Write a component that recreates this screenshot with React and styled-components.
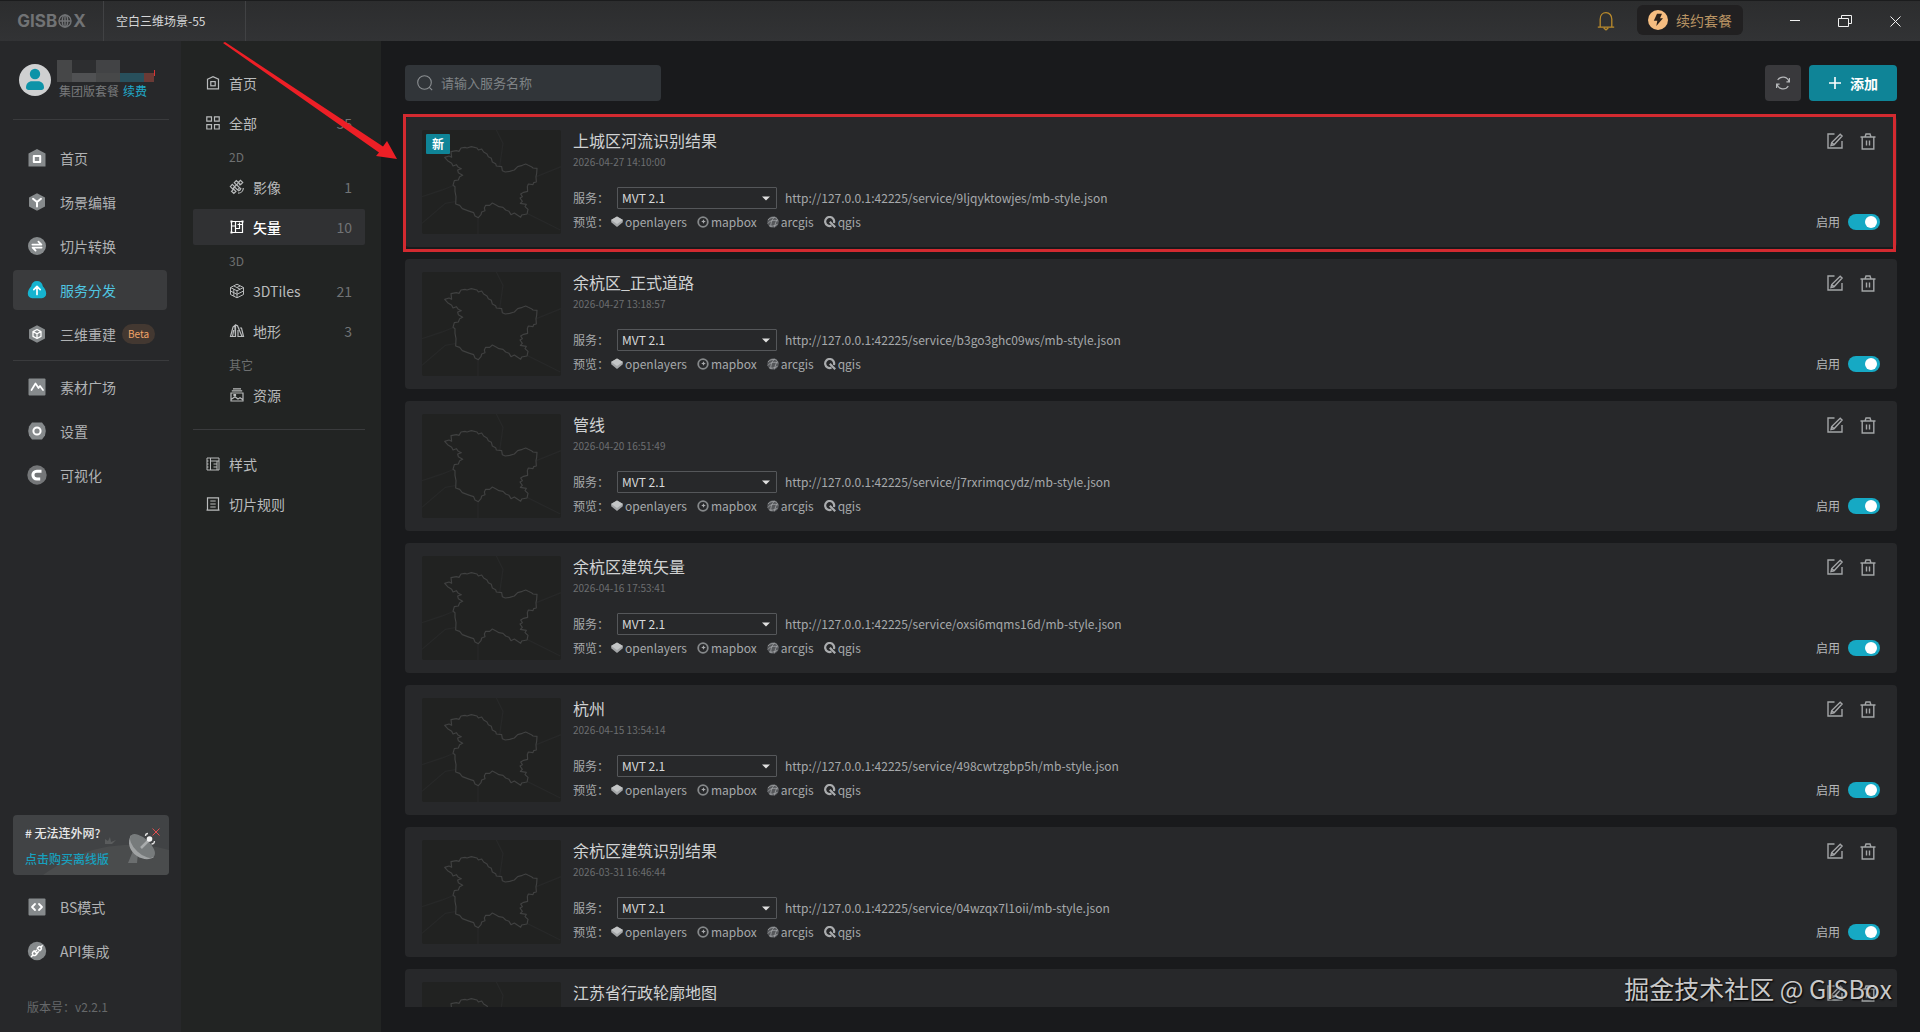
import React from "react";
import styled, { createGlobalStyle, css } from "styled-components";

const GlobalStyle = createGlobalStyle`
  *, *::before, *::after { box-sizing: border-box; }
  body {
    margin: 0;
    background: #191a1c;
    color: #c4c6c8;
    font-family: "Noto Sans CJK SC", "Noto Sans", sans-serif;
    font-size: 14px;
    line-height: 20px;
    overflow: hidden;
  }
  button, input, select { font: inherit; color: inherit; }
  button { background: none; border: 0; padding: 0; cursor: pointer; }
  a { color: inherit; text-decoration: none; }
  ul { list-style: none; margin: 0; padding: 0; }
  h2, p { margin: 0; font-weight: 400; }
  svg { display: block; flex: none; }
`;

const Shell = styled.div`
  position: relative;
  height: 100vh;
  display: grid;
  grid-template-rows: 41px minmax(0, 1fr);
`;

/* ---------- title bar ---------- */
const TitleBar = styled.header`
  display: flex;
  align-items: stretch;
  background: linear-gradient(#2c2d2e, #323335);
  border-top: 1px solid #1b1c1d;
`;
const Logo = styled.div`
  width: 104px;
  display: flex;
  align-items: center;
  justify-content: center;
  gap: 1px;
  border-right: 1px solid #414244;
  color: #717375;
  font: 700 17px/17px Inter, sans-serif;
`;
const SceneTab = styled.button`
  width: 142px;
  padding-left: 12px;
  text-align: left;
  font-size: 12px;
  color: #d6d7d8;
  border-right: 1px solid #414244;
`;
const TitleActions = styled.div`
  margin-left: auto;
  display: flex;
  align-items: center;
`;
const RenewPill = styled.button`
  display: flex;
  align-items: center;
  gap: 8px;
  height: 30px;
  padding: 0 11px;
  margin: 0 27px 2px 22px;
  border-radius: 6px;
  background: #212021;
  color: #b99464;
`;
const WindowButton = styled.button`
  width: 50px;
  height: 32px;
  display: grid;
  place-items: center;
  color: #f1f1f1;
`;
const BellButton = styled.button`
  display: grid;
  place-items: center;
  color: #b98a2c;
`;

/* ---------- body ---------- */
const Body = styled.div`
  display: grid;
  grid-template-columns: 181px 200px minmax(0, 1fr);
  min-height: 0;
`;
const Sidebar = styled.aside`
  display: flex;
  flex-direction: column;
  background: #27282a;
  padding: 19px 12px 15px 13px;
`;
const User = styled.div`
  display: flex;
  align-items: center;
  gap: 6px;
  height: 40px;
  padding-left: 6px;
`;
const UserMeta = styled.div`
  display: flex;
  flex-direction: column;
`;
const Plan = styled.p`
  font-size: 12px;
  line-height: 18px;
  padding-left: 2px;
  white-space: nowrap;
  color: #77797b;
`;
const Renew = styled.a`
  color: #20a9c8;
  margin-left: 4px;
`;
const Rule = styled.hr`
  width: 100%;
  height: 1px;
  border: 0;
  background: #3a3b3d;
  margin: ${(p) => p.$margin};
`;
const NavList = styled.ul`
  display: flex;
  flex-direction: column;
  gap: 4px;
`;
const NavLink = styled.a`
  display: flex;
  align-items: center;
  height: 40px;
  margin-right: 2px;
  padding-left: 14px;
  border-radius: 4px;
  white-space: nowrap;
  color: #b0b2b4;
  ${(p) => p.$active && css`
    background: #3a3b3d;
    color: #4fc6e2;
  `}
`;
const NavIcon = styled.span`
  width: 20px;
  margin-right: 13px;
  display: grid;
  place-items: center;
  color: #868a8c;
`;
const Beta = styled.span`
  margin-left: 6px;
  padding: 0 6px;
  border-radius: 10px;
  background: #433831;
  color: #f0a468;
  font-size: 10px;
  line-height: 20px;
`;
const Promo = styled.section`
  position: relative;
  margin: auto 0 12px;
  height: 60px;
  padding: 8px 12px;
  display: flex;
  flex-direction: column;
  gap: 6px;
  border-radius: 4px;
  overflow: hidden;
  background: #414345;
  font-size: 12px;
  color: #e8e8e8;
  font-weight: 500;
`;
const PromoArt = styled.svg`
  position: absolute;
  right: 0;
  bottom: 0;
`;
const PromoText = styled.span`
  position: relative;
`;
const PromoLink = styled.a`
  position: relative;
  color: #17a0be;
`;
const PromoClose = styled.button`
  position: absolute;
  top: 13px;
  right: 9px;
  color: #e04f4f;
`;
const Version = styled.p`
  padding-left: 14px;
  margin-top: 26px;
  font-size: 12px;
  color: #66686a;
`;

/* ---------- category column ---------- */
const Categories = styled.nav`
  background: #222423;
  padding: 24px 16px 0 12px;
`;
const CategoryLink = styled.a`
  display: flex;
  align-items: center;
  height: 36px;
  margin-bottom: ${(p) => (p.$tight ? "0" : "4px")};
  padding: 0 13px 0 ${(p) => (p.$nested ? "36px" : "12px")};
  border-radius: 2px;
  color: #b9bbbc;
  ${(p) => p.$active && css`
    background: #303133;
    color: #ffffff;
    font-weight: 500;
  `}
`;
const CategoryIcon = styled.span`
  width: 16px;
  margin-right: 8px;
  display: grid;
  place-items: center;
`;
const Count = styled.span`
  margin-left: auto;
  color: #717375;
  font-weight: 400;
`;
const GroupLabel = styled.p`
  padding-left: 36px;
  font-size: 12px;
  line-height: 24px;
  color: #6e7071;
`;

/* ---------- main ---------- */
const Main = styled.main`
  min-width: 0;
  min-height: 0;
  display: flex;
  flex-direction: column;
  padding: 24px 23px 25px 24px;
  background: #191a1c;
`;
const Toolbar = styled.div`
  display: flex;
  align-items: center;
  gap: 8px;
  margin-bottom: 16px;
`;
const SearchBox = styled.label`
  display: flex;
  align-items: center;
  gap: 8px;
  width: 256px;
  height: 36px;
  padding: 0 12px;
  margin-right: auto;
  border-radius: 4px;
  background: #313539;
  color: #8b8f92;
`;
const SearchInput = styled.input`
  flex: 1;
  min-width: 0;
  padding: 0;
  border: 0;
  outline: 0;
  background: none;
  font-size: 13px;
  &::placeholder { color: #7f8386; opacity: 1; }
`;
const RefreshButton = styled.button`
  width: 36px;
  height: 36px;
  display: grid;
  place-items: center;
  border-radius: 4px;
  background: #39393c;
  color: #b5b7b9;
`;
const AddButton = styled.button`
  display: flex;
  align-items: center;
  justify-content: center;
  gap: 8px;
  width: 88px;
  height: 36px;
  border-radius: 4px;
  background: #0f8497;
  color: #ffffff;
  font-weight: 700;
`;
const ServiceList = styled.ul`
  flex: 1;
  min-height: 0;
  overflow-y: auto;
  scrollbar-width: none;
  display: flex;
  flex-direction: column;
  gap: 12px;
`;
const Card = styled.li`
  flex: none;
  display: flex;
  gap: 12px;
  height: 130px;
  padding: 13px 17px;
  border-radius: 4px;
  background: #27282a;
`;
const Thumb = styled.div`
  position: relative;
  width: 139px;
  height: 104px;
  border-radius: 2px;
  overflow: hidden;
  background: #212221;
`;
const NewBadge = styled.span`
  position: absolute;
  top: 4px;
  left: 4px;
  width: 24px;
  border-radius: 1px;
  background: #0f8497;
  color: #ffffff;
  font-size: 12px;
  font-weight: 700;
  text-align: center;
`;
const Info = styled.div`
  flex: 1;
  min-width: 0;
  display: flex;
  flex-direction: column;
`;
const Name = styled.h2`
  margin-bottom: 4px;
  font-size: 16px;
  line-height: 20px;
  color: #d0d2d3;
`;
const Time = styled.time`
  margin-bottom: 17px;
  font-size: 10px;
  line-height: 16px;
  color: #6c6e70;
`;
const Field = styled.div`
  display: flex;
  align-items: center;
  height: 22px;
  margin-bottom: 2px;
  font-size: 12px;
  white-space: nowrap;
  color: #a6a8aa;
`;
const FieldLabel = styled.label`
  width: ${(p) => p.$width};
`;
const SelectWrap = styled.span`
  position: relative;
  width: 160px;
  margin-right: 8px;
  svg { position: absolute; right: 7px; top: 9px; pointer-events: none; }
`;
const Select = styled.select`
  display: block;
  appearance: none;
  width: 100%;
  height: 22px;
  padding: 0 20px 0 4px;
  border: 1px solid #55575a;
  border-radius: 1px;
  background: transparent;
  color: #d8d9da;
  line-height: 20px;
`;
const PreviewLinks = styled.span`
  display: flex;
  gap: 10px;
`;
const PreviewLink = styled.a`
  display: flex;
  align-items: center;
  gap: 2px;
`;
const Side = styled.div`
  display: flex;
  flex-direction: column;
  align-items: flex-end;
  justify-content: space-between;
  padding: 2px 0 4px;
`;
const IconActions = styled.div`
  display: flex;
  gap: 15px;
  padding-right: 3px;
`;
const IconButton = styled.button`
  color: #a3a5a7;
`;
const SwitchLabel = styled.label`
  display: flex;
  align-items: center;
  gap: 8px;
  font-size: 12px;
  line-height: 16px;
  color: #b6b8ba;
`;
const Switch = styled.input`
  appearance: none;
  position: relative;
  width: 32px;
  height: 16px;
  margin: 0;
  border-radius: 8px;
  background: #45474a;
  &::after {
    content: "";
    position: absolute;
    top: 2px;
    left: 3px;
    width: 12px;
    height: 12px;
    border-radius: 50%;
    background: #ffffff;
  }
  &:checked { background: #16a9c4; }
  &:checked::after { left: 17px; }
`;

/* ---------- annotations over the page ---------- */
const Highlight = styled.div`
  position: absolute;
  top: 114px;
  left: 403px;
  right: 24px;
  height: 138px;
  border: 3px solid #d32a30;
  pointer-events: none;
`;
const Arrow = styled.svg`
  position: absolute;
  top: 41px;
  left: 220px;
  pointer-events: none;
`;
const Watermark = styled.p`
  position: absolute;
  right: 28px;
  bottom: 26px;
  font-size: 25px;
  line-height: 36px;
  color: #c9c9c9;
  text-shadow: 1px 1px 2px #000000;
  pointer-events: none;
`;

/* ---------- icons ---------- */
const Solid = ({ children, size = 20 }) => (
  <svg width={size} height={size} viewBox="0 0 20 20" fill="none" strokeLinecap="round" strokeLinejoin="round" aria-hidden="true">{children}</svg>
);
const Line = ({ children, size = 16, width = 1.2 }) => (
  <svg width={size} height={size} viewBox="0 0 16 16" fill="none" stroke="currentColor" strokeWidth={width} aria-hidden="true">{children}</svg>
);
const HEX = "M10 1.2 18 5.4v9.2L10 18.8 2 14.6V5.4Z";

const navIcons = {
  home: <Solid><path d="M10 1 18.5 5.5V18.5H1.5V5.5Z" fill="currentColor" /><rect x="6.8" y="8" width="6.4" height="6" stroke="#fff" strokeWidth="2" /></Solid>,
  scene: <Solid><path d={HEX} fill="currentColor" /><path d="M6 6.8 10 10l4-3.2M10 10v4.4" stroke="#fff" strokeWidth="2" /></Solid>,
  convert: <Solid><circle cx="10" cy="10" r="9" fill="currentColor" /><path d="M5.4 8.6h9L11.4 5.6M14.6 11.6h-9l3 3" stroke="#fff" strokeWidth="1.8" /></Solid>,
  publish: <Solid><path d="M10 1c3.3 0 5.3 2 5.8 5.2C17.9 8.6 19.2 11 19.2 13.6c0 2.8-1.8 4.6-4.4 4.6H5.2C2.6 18.2.8 16.4.8 13.6.8 11 2.1 8.6 4.2 6.2 4.7 3 6.7 1 10 1Z" fill="#16b4d0" /><path d="M10 14.4V6.8M6.8 9.6 10 6.4l3.2 3.2" stroke="#fff" strokeWidth="1.7" /></Solid>,
  rebuild: <Solid><path d={HEX} fill="currentColor" /><path d="M10 5.5 14 7.6v4.8l-4 2.1-4-2.1V7.6ZM6 7.6l4 2.2 4-2.2M10 9.8v4.6" stroke="#fff" strokeWidth="1.3" /></Solid>,
  assets: <Solid><rect x="1.5" y="1.5" width="17" height="17" rx="1" fill="currentColor" /><path d="m4.5 13 4-6.5 3 4.5 1.5-2 3 4" stroke="#fff" strokeWidth="1.7" /></Solid>,
  settings: <Solid><path d="M5 1.5h10L18 5.5 18.8 10 18 14.5 15 18.5H5L2 14.5 1.2 10 2 5.5Z" fill="currentColor" /><circle cx="10" cy="10" r="3.6" stroke="#fff" strokeWidth="2" /></Solid>,
  visual: <Solid><circle cx="10" cy="10" r="9.7" fill="#747678" /><path d="M14.5 6.2H9.8a3.9 3.9 0 0 0 0 7.8h3.4" stroke="#fff" strokeWidth="3" strokeLinecap="butt" /><path d="M11 9.2h2.5" stroke="#747678" strokeWidth="1.5" /></Solid>,
  bs: <Solid><rect x="1.5" y="1.5" width="17" height="17" rx="1" fill="currentColor" /><path d="M8 7 5 10l3 3M12 7l3 3-3 3" stroke="#fff" strokeWidth="1.8" /></Solid>,
  api: <Solid><circle cx="10" cy="10" r="9.2" fill="currentColor" /><g stroke="#fff" strokeWidth="1.5"><path d="m10.300 7.200 2.500 2.500 1.300-1.300a1.800 1.800 0 0 0-2.500-2.500ZM7.200 9.900l2.800 2.800-1.400 1.400a2 2 0 0 1-2.800-2.800ZM13.700 6.300l1.500-1.500M5.800 14.200l-1.300 1.300M8.800 10l.8-.8M10.500 11.700l.8-.8" /></g></Solid>,
};

const categoryIcons = {
  home: <Line><path d="M2.5 4.2 8 1.6l5.500 2.600v9.700h-11Z" /><rect x="5.8" y="6.6" width="4.4" height="4.2" /></Line>,
  all: <Line><path d="M1.8 1.8h4.700v4.400H1.800ZM9.500 1.800h4.700v4.400H9.500ZM1.800 9.600h4.700V14H1.800ZM9.500 9.600h4.700V14H9.500Z" /></Line>,
  image: <Line><path d="m5.300 3.700 2-2.200 2.300 2.300-2.100 2.100ZM1.300 7.600l2-2.200 2.300 2.300-2 2.200ZM2.500 12.300l2.100-2.100 2.300 2.200-2.100 2.100ZM9.500 3.300l2-1.900 2.200 2.200-2.100 2.100ZM5.500 7.800 7.700 5.900l2.900 2.900-2.100 2.100ZM10 6l2-1M3.800 10.200 5.800 8.200" /><path d="M9 14.200c3 0 5.300-2.300 5.300-5.300M9 11.800c1.700-.2 2.700-1.200 2.900-2.900" /></Line>,
  vector: <Line><path d="M2.500 2.500h11v11h-11ZM6.500 2.500v11M2.500 7h4M6.500 9.500h4V3.500M8.500 5.500h5" /><path d="M1.500 1.500h2v2h-2ZM12.500 1.500h2v2h-2ZM1.500 12.500h2v2h-2Z" fill="currentColor" stroke="none" /></Line>,
  tiles: <Line width={1}><path d="M8 1.200 14.500 4.500v7L8 14.800l-6.500-3.300v-7ZM1.500 4.500 8 7.800l6.500-3.300M8 7.800v7M5 3l6 3.200M4.800 6.200v6.900M1.500 8 8 11.300 14.500 8M11 3 8 4.500" /></Line>,
  terrain: <Line><path d="M1.500 13.500 4 4l1.800-1.500L6.500 13.500ZM6.500 13.500V2l2 .8L13 13.500M9 7v6.500h5.500L12.500 5h-1.700M3.500 13.500 4.700 7" /></Line>,
  resource: <Line><path d="M4 1.800h8M2.800 3.900h10.400M2 6h12v8H2ZM2 12.500l4-2.800 3 2.300 2-1.200 3 2" /><path d="M5 7.600h1.500v1H5Z" /></Line>,
  style: <Line width={1}><path d="M2 2h12v12H2ZM5.500 2v12M5.500 5H14M12 5v9M8.500 8H12M8.500 11H12M2 5h1.500M2 8h1.500M2 11h1.500" /></Line>,
  rules: <Line><path d="M2.500 1.800h11v12.400h-11ZM5.300 5h5.400M5.300 8h5.400M5.300 11h5.400M1.500 14.200h13" /></Line>,
};

const Globe = () => (
  <svg width="14" height="14" viewBox="0 0 13 13" fill="none" stroke="currentColor" strokeWidth="1.3" aria-hidden="true">
    <circle cx="6.5" cy="6.5" r="5.6" /><ellipse cx="6.5" cy="6.5" rx="2.5" ry="5.6" /><path d="M1 6.500h11M6.500 1v11" />
  </svg>
);
const BellIcon = () => (
  <svg width="18" height="20" viewBox="0 0 18 20" fill="none" stroke="currentColor" strokeWidth="1.3" aria-hidden="true">
    <path d="M.8 16.200h16.400M3.200 16V8.200C3.200 4.300 5.600 1.700 9 1.700s5.800 2.600 5.800 6.500V16M6.700 17l2.300 1.800 2.300-1.800" />
  </svg>
);
const BoltIcon = () => (
  <svg width="20" height="20" viewBox="0 0 20 20" aria-hidden="true">
    <circle cx="10" cy="10" r="10" fill="#f6bd80" /><path d="M9 3.800h5L12 8.200h3L8.300 16l1-5.200H5.800Z" fill="#2a211b" />
  </svg>
);
const AvatarIcon = () => (
  <svg width="32" height="32" viewBox="0 0 32 32" aria-hidden="true">
    <circle cx="16" cy="16" r="16" fill="#cfd0d1" /><circle cx="16" cy="10" r="5.2" fill="#0d93a8" />
    <path d="M7 23.500c0-4 2.500-6.300 6-6.300h6c3.500 0 6 2.300 6 6.300 0 1.400-1 2.500-2.500 2.500h-13C8 26 7 24.900 7 23.500Z" fill="#0d93a8" />
  </svg>
);
const MaskedName = () => (
  <svg width="98" height="22" viewBox="0 0 98 22" shapeRendering="crispEdges" aria-hidden="true">
    <path d="M0 0h15v22H0Z" fill="#464748" /><path d="M15 0h24v13H15Z" fill="#2d2e30" /><path d="M15 13h24v9H15Z" fill="#505153" />
    <path d="M39 0h24v13H39Z" fill="#424345" /><path d="M39 13h24v9H39Z" fill="#474849" /><path d="M63 13h24v9H63Z" fill="#28505c" />
    <path d="M87 13h10v9H87Z" fill="#6b3a35" /><path d="M97 10h1v6h-1Z" fill="#d33" />
  </svg>
);
const SearchIcon = () => (
  <svg width="16" height="16" viewBox="0 0 16 16" fill="none" stroke="currentColor" strokeWidth="1.1" aria-hidden="true">
    <circle cx="7.5" cy="7.5" r="6.8" /><path d="m12.300 12.300 2.900 2.900" />
  </svg>
);
const RefreshIcon = () => (
  <Line><path d="M14 6.800A6.200 6.200 0 0 0 2.700 5M2 9.200A6.200 6.200 0 0 0 13.300 11M14.400 3v3.900h-3M1.600 13V9.100h3" /></Line>
);
const PlusIcon = () => (
  <svg width="14" height="14" viewBox="0 0 14 14" stroke="currentColor" strokeWidth="1.6" aria-hidden="true"><path d="M7 1v12M1 7h12" /></svg>
);
const EditIcon = () => (
  <svg width="18" height="18" viewBox="0 0 18 18" fill="none" stroke="currentColor" strokeWidth="1.4" aria-hidden="true">
    <path d="M8.500 2H2v14h14V9M14.200 2.200l1.900 1.900L8 12.800l-3 .7.700-3ZM5.700 10.500 8 12.800" />
  </svg>
);
const TrashIcon = () => (
  <svg width="18" height="18" viewBox="0 0 18 18" fill="none" stroke="currentColor" strokeWidth="1.4" aria-hidden="true">
    <path d="M1.500 5h15M3.200 5v12h11.600V5M6 5l1-3h4l1 3M7.500 8.500v5M10.500 8.500v5" />
  </svg>
);
const CaretIcon = () => <svg width="8" height="5" viewBox="0 0 8 5" aria-hidden="true"><path d="M0 .5h8L4 4.500Z" fill="#e0e0e0" /></svg>;

const previewIcons = {
  openlayers: <svg width="12" height="12" viewBox="0 0 12 12" aria-hidden="true"><path d="M6 .5 11.800 3.800v2.400L6 11 .2 6.200V3.800Z" fill="#a4a6a8" /><path d="M6 .5 11.800 4 6 8 .2 4Z" fill="#c3c5c6" /></svg>,
  mapbox: <svg width="12" height="12" viewBox="0 0 12 12" aria-hidden="true"><circle cx="6" cy="6" r="4.800" fill="none" stroke="#85888a" strokeWidth="1.800" /><path d="m6.500 3.200.7 1.600 1.600.7-1.600.7-.7 1.600-.7-1.600-1.600-.7 1.600-.7Z" fill="#a9abad" /></svg>,
  arcgis: <svg width="12" height="12" viewBox="0 0 12 12" fill="none" stroke="#a5a7a9" strokeWidth=".8" aria-hidden="true"><circle cx="6" cy="6" r="5.8" fill="#55575a" stroke="none" /><path d="M1 4C3 1.500 7 .5 10 2.500M.8 7.500C3 4.500 7 3.500 11.400 5M4 11.200c-.8-3 .5-7 3.500-10.500M7.500 11.300C8 8 9 5 10.500 3M2 9.800c2 .8 5 .5 8.500-1.500" /></svg>,
  qgis: <svg width="12" height="12" viewBox="0 0 12 12" fill="none" stroke="#aaacae" strokeWidth="2.200" aria-hidden="true"><path d="M7.500 9.600A4.500 4.500 0 1 1 9.900 7" /><path d="m5.800 5.800 5.400 5.400" /></svg>,
};

const OUTLINE = "M165 322 178 318 186 322 184 305 200 302 208 304 214 294 226 292 232 294 245 290 262 294 266 300 276 297 282 306 292 312 296 320 305 325 308 336 318 341 320 348 336 350 338 362 347 366 360 364 374 360 384 350 398 346 408 342 416 346 425 350 430 354 442 355 441 370 439 380 440 396 432 398 430 404 416 402 413 410 414 424 402 427 393 432 398 440 391 444 398 454 392 460 410 463 406 470 415 478 412 492 396 495 393 502 384 496 374 489 364 494 358 484 348 480 340 472 328 470 318 464 308 459 300 466 288 466 284 474 286 482 276 486 274 494 266 503 256 498 252 488 240 484 226 479 218 476 210 466 198 462 199 440 196 424 196 410 190 406 194 392 206 390 210 380 219 376 206 368 204 360 215 356 206 352 200 344 190 348 186 340 174 332Z";

const Boundary = () => (
  <svg width="139" height="104" viewBox="97 240 417 312" fill="none" aria-hidden="true">
    <path d="M97 440l60-20 38-15M265 503v49M412 490l100 50M330 350l10-70-20-40M440 380l74-30M97 520l70-60 30-5" stroke="#272828" strokeWidth="4" />
    <path d={OUTLINE} stroke="#404141" strokeWidth="3.5" strokeLinejoin="round" />
  </svg>
);

const DishArt = () => (
  <PromoArt width="156" height="60" viewBox="0 0 156 60" aria-hidden="true">
    <path d="M30 60C60 38 90 30 116 30c18 0 30 2 40 5v25Z" fill="#4a4c4d" />
    <path d="M92 29v-5l3 2 2-4 1 5 5-2-4 4Z" fill="#5a5c5d" />
    <path d="m120 36-5 12h9l1-10Z" fill="#6b6e6f" />
    <path d="M118 20c-4 7-2 16 6 21 6 4 13 4 17 1Z" fill="#a0a3a4" />
    <ellipse cx="129.500" cy="31" rx="15.500" ry="7.500" transform="rotate(43 129.500 31)" fill="#777b7c" />
    <path d="m128 33 8-8" stroke="#a9acad" strokeWidth="2.500" />
    <circle cx="136.500" cy="24" r="2.800" fill="#f2f2f2" />
    <path d="M132.500 21c0-1.500 1-2.500 2.500-2.500M138.500 29c1.800 0 3-1.200 3-3" stroke="#dddddd" strokeWidth="1.300" fill="none" />
  </PromoArt>
);

/* ---------- data ---------- */
const mainNav = [
  ["home", "首页"], ["scene", "场景编辑"], ["convert", "切片转换"], ["publish", "服务分发"], ["rebuild", "三维重建", "Beta"],
];
const moreNav = [["assets", "素材广场"], ["settings", "设置"], ["visual", "可视化"]];
const footNav = [["bs", "BS模式"], ["api", "API集成"]];

const services = [
  { name: "上城区河流识别结果", time: "2026-04-27 14:10:00", id: "9ljqyktowjes", fresh: true },
  { name: "余杭区_正式道路", time: "2026-04-27 13:18:57", id: "b3go3ghc09ws" },
  { name: "管线", time: "2026-04-20 16:51:49", id: "j7rxrimqcydz" },
  { name: "余杭区建筑矢量", time: "2026-04-16 17:53:41", id: "oxsi6mqms16d" },
  { name: "杭州", time: "2026-04-15 13:54:14", id: "498cwtzgbp5h" },
  { name: "余杭区建筑识别结果", time: "2026-03-31 16:46:44", id: "04wzqx7l1oii" },
  { name: "江苏省行政轮廓地图" },
];

const Nav = ({ items }) => (
  <NavList>
    {items.map(([icon, text, tag]) => (
      <li key={icon}>
        <NavLink href="#" $active={icon === "publish"}>
          <NavIcon>{navIcons[icon]}</NavIcon>
          {text}
          {tag && <Beta>{tag}</Beta>}
        </NavLink>
      </li>
    ))}
  </NavList>
);

const Category = ({ icon, text, count, ...rest }) => (
  <CategoryLink href="#" {...rest}>
    <CategoryIcon>{categoryIcons[icon]}</CategoryIcon>
    {text}
    {count && <Count>{count}</Count>}
  </CategoryLink>
);

/* The address, previews and switch appear once a service has its id. */
const ServiceCard = ({ name, time, id, fresh }) => (
  <Card>
    <Thumb>
      <Boundary />
      {fresh && <NewBadge>新</NewBadge>}
    </Thumb>
    <Info>
      <Name>{name}</Name>
      {time && <Time>{time}</Time>}
      {id && (
        <>
          <Field>
            <FieldLabel htmlFor={`type-${id}`} $width="44px">服务：</FieldLabel>
            <SelectWrap>
              <Select id={`type-${id}`} defaultValue="MVT 2.1"><option>MVT 2.1</option></Select>
              <CaretIcon />
            </SelectWrap>
            <a href="#">{`http://127.0.0.1:42225/service/${id}/mb-style.json`}</a>
          </Field>
          <Field>
            <FieldLabel as="span" $width="38px">预览：</FieldLabel>
            <PreviewLinks>
              {Object.keys(previewIcons).map((key) => (
                <PreviewLink href="#" key={key}>{previewIcons[key]}{key}</PreviewLink>
              ))}
            </PreviewLinks>
          </Field>
        </>
      )}
    </Info>
    <Side>
      <IconActions>
        <IconButton type="button" aria-label="编辑"><EditIcon /></IconButton>
        <IconButton type="button" aria-label="删除"><TrashIcon /></IconButton>
      </IconActions>
      {id && <SwitchLabel>启用<Switch type="checkbox" defaultChecked /></SwitchLabel>}
    </Side>
  </Card>
);

export default function App() {
  return (
    <>
      <GlobalStyle />
      <Shell>
        <TitleBar>
          <Logo>GISB<Globe />X</Logo>
          <SceneTab type="button">空白三维场景-55</SceneTab>
          <TitleActions>
            <BellButton type="button" aria-label="通知"><BellIcon /></BellButton>
            <RenewPill type="button"><BoltIcon />续约套餐</RenewPill>
            <WindowButton type="button" aria-label="最小化"><svg width="10" height="10" stroke="currentColor"><path d="M0 4.500h10" /></svg></WindowButton>
            <WindowButton type="button" aria-label="还原"><svg width="14" height="12" fill="none" stroke="currentColor"><path d="M.5 3.500h10v8H.5ZM3.500 3.500v-3h10v8h-3" /></svg></WindowButton>
            <WindowButton type="button" aria-label="关闭"><svg width="11" height="11" stroke="currentColor"><path d="m.5.5 10 10M10.500.5l-10 10" /></svg></WindowButton>
          </TitleActions>
        </TitleBar>
        <Body>
          <Sidebar>
            <User>
              <AvatarIcon />
              <UserMeta>
                <MaskedName />
                <Plan>集团版套餐<Renew href="#">续费</Renew></Plan>
              </UserMeta>
            </User>
            <Rule $margin="19px 0 18px" />
            <Nav items={mainNav} />
            <Rule $margin="6px 0" />
            <Nav items={moreNav} />
            <Promo>
              <DishArt />
              <PromoText># 无法连外网?</PromoText>
              <PromoLink href="#">点击购买离线版</PromoLink>
              <PromoClose type="button" aria-label="关闭"><svg width="8" height="8" stroke="currentColor"><path d="m.5.5 7 7M7.500.5l-7 7" /></svg></PromoClose>
            </Promo>
            <Nav items={footNav} />
            <Version>版本号：v2.2.1</Version>
          </Sidebar>
          <Categories>
            <Category icon="home" text="首页" />
            <Category icon="all" text="全部" count="35" />
            <GroupLabel>2D</GroupLabel>
            <Category icon="image" text="影像" count="1" $nested />
            <Category icon="vector" text="矢量" count="10" $nested $active />
            <GroupLabel>3D</GroupLabel>
            <Category icon="tiles" text="3DTiles" count="21" $nested />
            <Category icon="terrain" text="地形" count="3" $nested />
            <GroupLabel>其它</GroupLabel>
            <Category icon="resource" text="资源" $nested $tight />
            <Rule $margin="16px 0" />
            <Category icon="style" text="样式" />
            <Category icon="rules" text="切片规则" />
          </Categories>
          <Main>
            <Toolbar>
              <SearchBox>
                <SearchIcon />
                <SearchInput type="text" placeholder="请输入服务名称" aria-label="请输入服务名称" />
              </SearchBox>
              <RefreshButton type="button" aria-label="刷新"><RefreshIcon /></RefreshButton>
              <AddButton type="button"><PlusIcon />添加</AddButton>
            </Toolbar>
            <ServiceList>
              {services.map((s) => <ServiceCard key={s.name} {...s} />)}
            </ServiceList>
          </Main>
        </Body>
        <Highlight />
        <Arrow width="180" height="122" viewBox="0 0 180 122" aria-hidden="true">
          <path d="M3 2 5 1 163 105.500 167 100 177 118 156 115 159 111.500Z" fill="#ed1f26" />
        </Arrow>
        <Watermark>掘金技术社区 @ GISBox</Watermark>
      </Shell>
    </>
  );
}
